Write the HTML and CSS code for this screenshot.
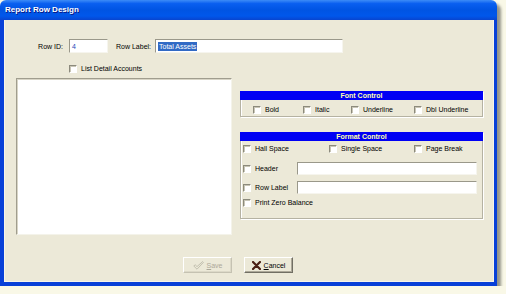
FILE: index.html
```html
<!DOCTYPE html>
<html lang="en">
<head>
    <meta charset="utf-8">
    <title>Report Row Design</title>
    <link rel="stylesheet" href="styles.css">
</head>
<body>
    <div class="window">
        <div class="titlebar">Report Row Design</div>
        <div class="client">
            <div class="id-row">
                <span class="lbl-id">Row ID:</span>
                <div class="textbox id-box"><span class="val">4</span></div>
                <span class="lbl-label">Row Label:</span>
                <div class="textbox label-box"><span class="sel">Total Assets</span></div>
            </div>
            <div class="check detail-check"><span class="box"></span>List Detail Accounts</div>

            <div class="main">
                <div class="listbox"></div>
                <div class="side">
                    <div class="frame font-frame">
                        <div class="frame-head">Font Control</div>
                        <div class="frame-body font-row">
                            <div class="check"><span class="box"></span>Bold</div>
                            <div class="check"><span class="box"></span>Italic</div>
                            <div class="check"><span class="box"></span>Underline</div>
                            <div class="check"><span class="box"></span>Dbl Underline</div>
                        </div>
                    </div>
                    <div class="frame format-frame">
                        <div class="frame-head">Format Control</div>
                        <div class="frame-body">
                            <div class="space-row">
                                <div class="check"><span class="box"></span>Hall Space</div>
                                <div class="check"><span class="box"></span>Single Space</div>
                                <div class="check"><span class="box"></span>Page Break</div>
                            </div>
                            <div class="field-row header-row">
                                <div class="check"><span class="box"></span>Header</div>
                                <div class="textbox wide-box"></div>
                            </div>
                            <div class="field-row rowlabel-row">
                                <div class="check"><span class="box"></span>Row Label</div>
                                <div class="textbox wide-box"></div>
                            </div>
                            <div class="check zero-check"><span class="box"></span>Print Zero Balance</div>
                        </div>
                    </div>
                </div>
            </div>

            <div class="buttons">
                <button class="btn btn-save" disabled>
                    <svg width="11" height="9" viewBox="0 0 11 9">
                        <path d="M0.8 5 L2.2 3.8 L4 5.6 L9.6 0.6 L10.4 1.4 L4 8.2 Z" fill="none" stroke="#b9b6a6" stroke-width="0.8"/>
                    </svg>
                    <span><u>S</u>ave</span>
                </button>
                <button class="btn btn-cancel">
                    <svg width="9" height="9" viewBox="0 0 9 9">
                        <path d="M1 1 L8 8 M8 1 L1 8" stroke="#4a1f14" stroke-width="2.2" stroke-linecap="round"/>
                    </svg>
                    <span><u>C</u>ancel</span>
                </button>
            </div>
        </div>
    </div>
</body>
</html>
```

FILE: styles.css
```css
body {
    margin: 0;
    padding: 0;
    background-color: #f9f8e7;
    font-family: 'Liberation Sans', Arial, sans-serif;
    font-size: 7px;
    color: #000;
}
.window {
    width: 497px;
    height: 286px;
    display: flex;
    flex-direction: column;
    border-radius: 6px 6px 0 0;
    box-shadow: 4px 4px 3px rgba(0, 0, 0, 0.4);
}
.titlebar {
    height: 20px;
    line-height: 19px;
    padding-left: 5px;
    color: #ffffff;
    font-weight: bold;
    font-size: 8px;
    text-shadow: 1px 1px #0a1883;
    border-radius: 6px 6px 0 0;
    background: linear-gradient(#3d8cf7 0%, #0a5ff0 18%, #0054e3 50%, #0057eb 80%, #0845cf 100%);
}
.client {
    flex: 1;
    background-color: #ece9d8;
    border-left: 4px solid #0840d8;
    border-right: 3px solid #0840d8;
    border-bottom: 4px solid #0840d8;
    box-shadow: inset 1px 0 #f6f4ea, inset -1px -1px #f6f4ea;
}

/* top row */
.id-row {
    display: flex;
    align-items: center;
    margin-top: 19px;
    height: 14px;
}
.lbl-id {
    width: 28px;
    margin-left: 31px;
    text-align: right;
}
.lbl-label {
    width: 36px;
    margin-left: 8px;
    margin-right: 3px;
}
.textbox {
    box-sizing: border-box;
    height: 14px;
    background-color: #ffffff;
    border: 1px solid;
    border-color: #9a988a #f6f5ee #f6f5ee #9a988a;
    display: flex;
    align-items: center;
    padding-left: 2px;
}
.id-box {
    width: 39px;
    margin-left: 6px;
}
.id-box .val {
    color: #2a48b8;
}
.label-box {
    width: 188px;
}
.sel {
    background-color: #316ac5;
    color: #ffffff;
    padding: 0 1px;
    line-height: 9px;
}

/* checkboxes */
.check {
    display: flex;
    align-items: center;
    height: 9px;
    white-space: nowrap;
}
.box {
    box-sizing: border-box;
    width: 8px;
    height: 8px;
    margin-right: 4px;
    background-color: #ffffff;
    border: 1px solid;
    border-color: #8c8a7c #ffffff #ffffff #8c8a7c;
    box-shadow: inset 1px 1px #c9c6b6;
    flex-shrink: 0;
}
.detail-check {
    margin-top: 11px;
    margin-left: 65px;
}

/* list + side panel */
.main {
    display: flex;
    margin-top: 5px;
    margin-left: 12px;
    gap: 8px;
    height: 157px;
}
.listbox {
    box-sizing: border-box;
    width: 216px;
    height: 157px;
    background-color: #ffffff;
    border: 1px solid;
    border-color: #a09d8e #f4f3ea #f4f3ea #a09d8e;
    box-shadow: inset 1px 1px #d8d5c6;
}
.side {
    width: 243px;
    padding-top: 13px;
}
.frame {
    box-sizing: border-box;
    width: 243px;
    border-left: 1px solid #b5b2a2;
    border-right: 1px solid #b5b2a2;
    border-bottom: 1px solid #b5b2a2;
    box-shadow: 1px 1px #ffffff, inset 1px 0 #ffffff;
}
.frame-head {
    height: 9px;
    line-height: 9px;
    background-color: #0000f4;
    color: #ffffb0;
    font-weight: bold;
    text-align: center;
    margin-left: -1px;
    margin-right: -1px;
}
.font-row {
    display: grid;
    grid-template-columns: 50px 48px 63px auto;
    padding: 5px 0 2px 12px;
    height: 16px;
    box-sizing: border-box;
}
.format-frame {
    margin-top: 15px;
}
.format-frame .frame-body {
    padding: 3px 0 11px 2px;
}
.space-row {
    display: grid;
    grid-template-columns: 86px 85px auto;
}
.field-row {
    display: flex;
    align-items: center;
    height: 13px;
}
.field-row .check {
    width: 54px;
}
.header-row {
    margin-top: 9px;
}
.rowlabel-row {
    margin-top: 6px;
}
.wide-box {
    width: 180px;
    height: 13px;
}
.zero-check {
    margin-top: 4px;
}

/* buttons */
.buttons {
    display: flex;
    gap: 12px;
    margin-top: 22px;
    margin-left: 179px;
}
.btn {
    box-sizing: border-box;
    width: 49px;
    height: 16px;
    padding: 0;
    display: flex;
    align-items: center;
    justify-content: center;
    gap: 3px;
    font-family: 'Liberation Sans', Arial, sans-serif;
    font-size: 7px;
    background-color: #ece9d8;
    border: 1px solid;
    border-color: #ffffff #716f64 #716f64 #ffffff;
    box-shadow: inset -1px -1px #aca899;
    color: #000;
}
.btn-save {
    border-color: #ffffff #c5c2b2 #c5c2b2 #ffffff;
    box-shadow: inset -1px -1px #dcd9c8;
    color: #aca899;
}
```
